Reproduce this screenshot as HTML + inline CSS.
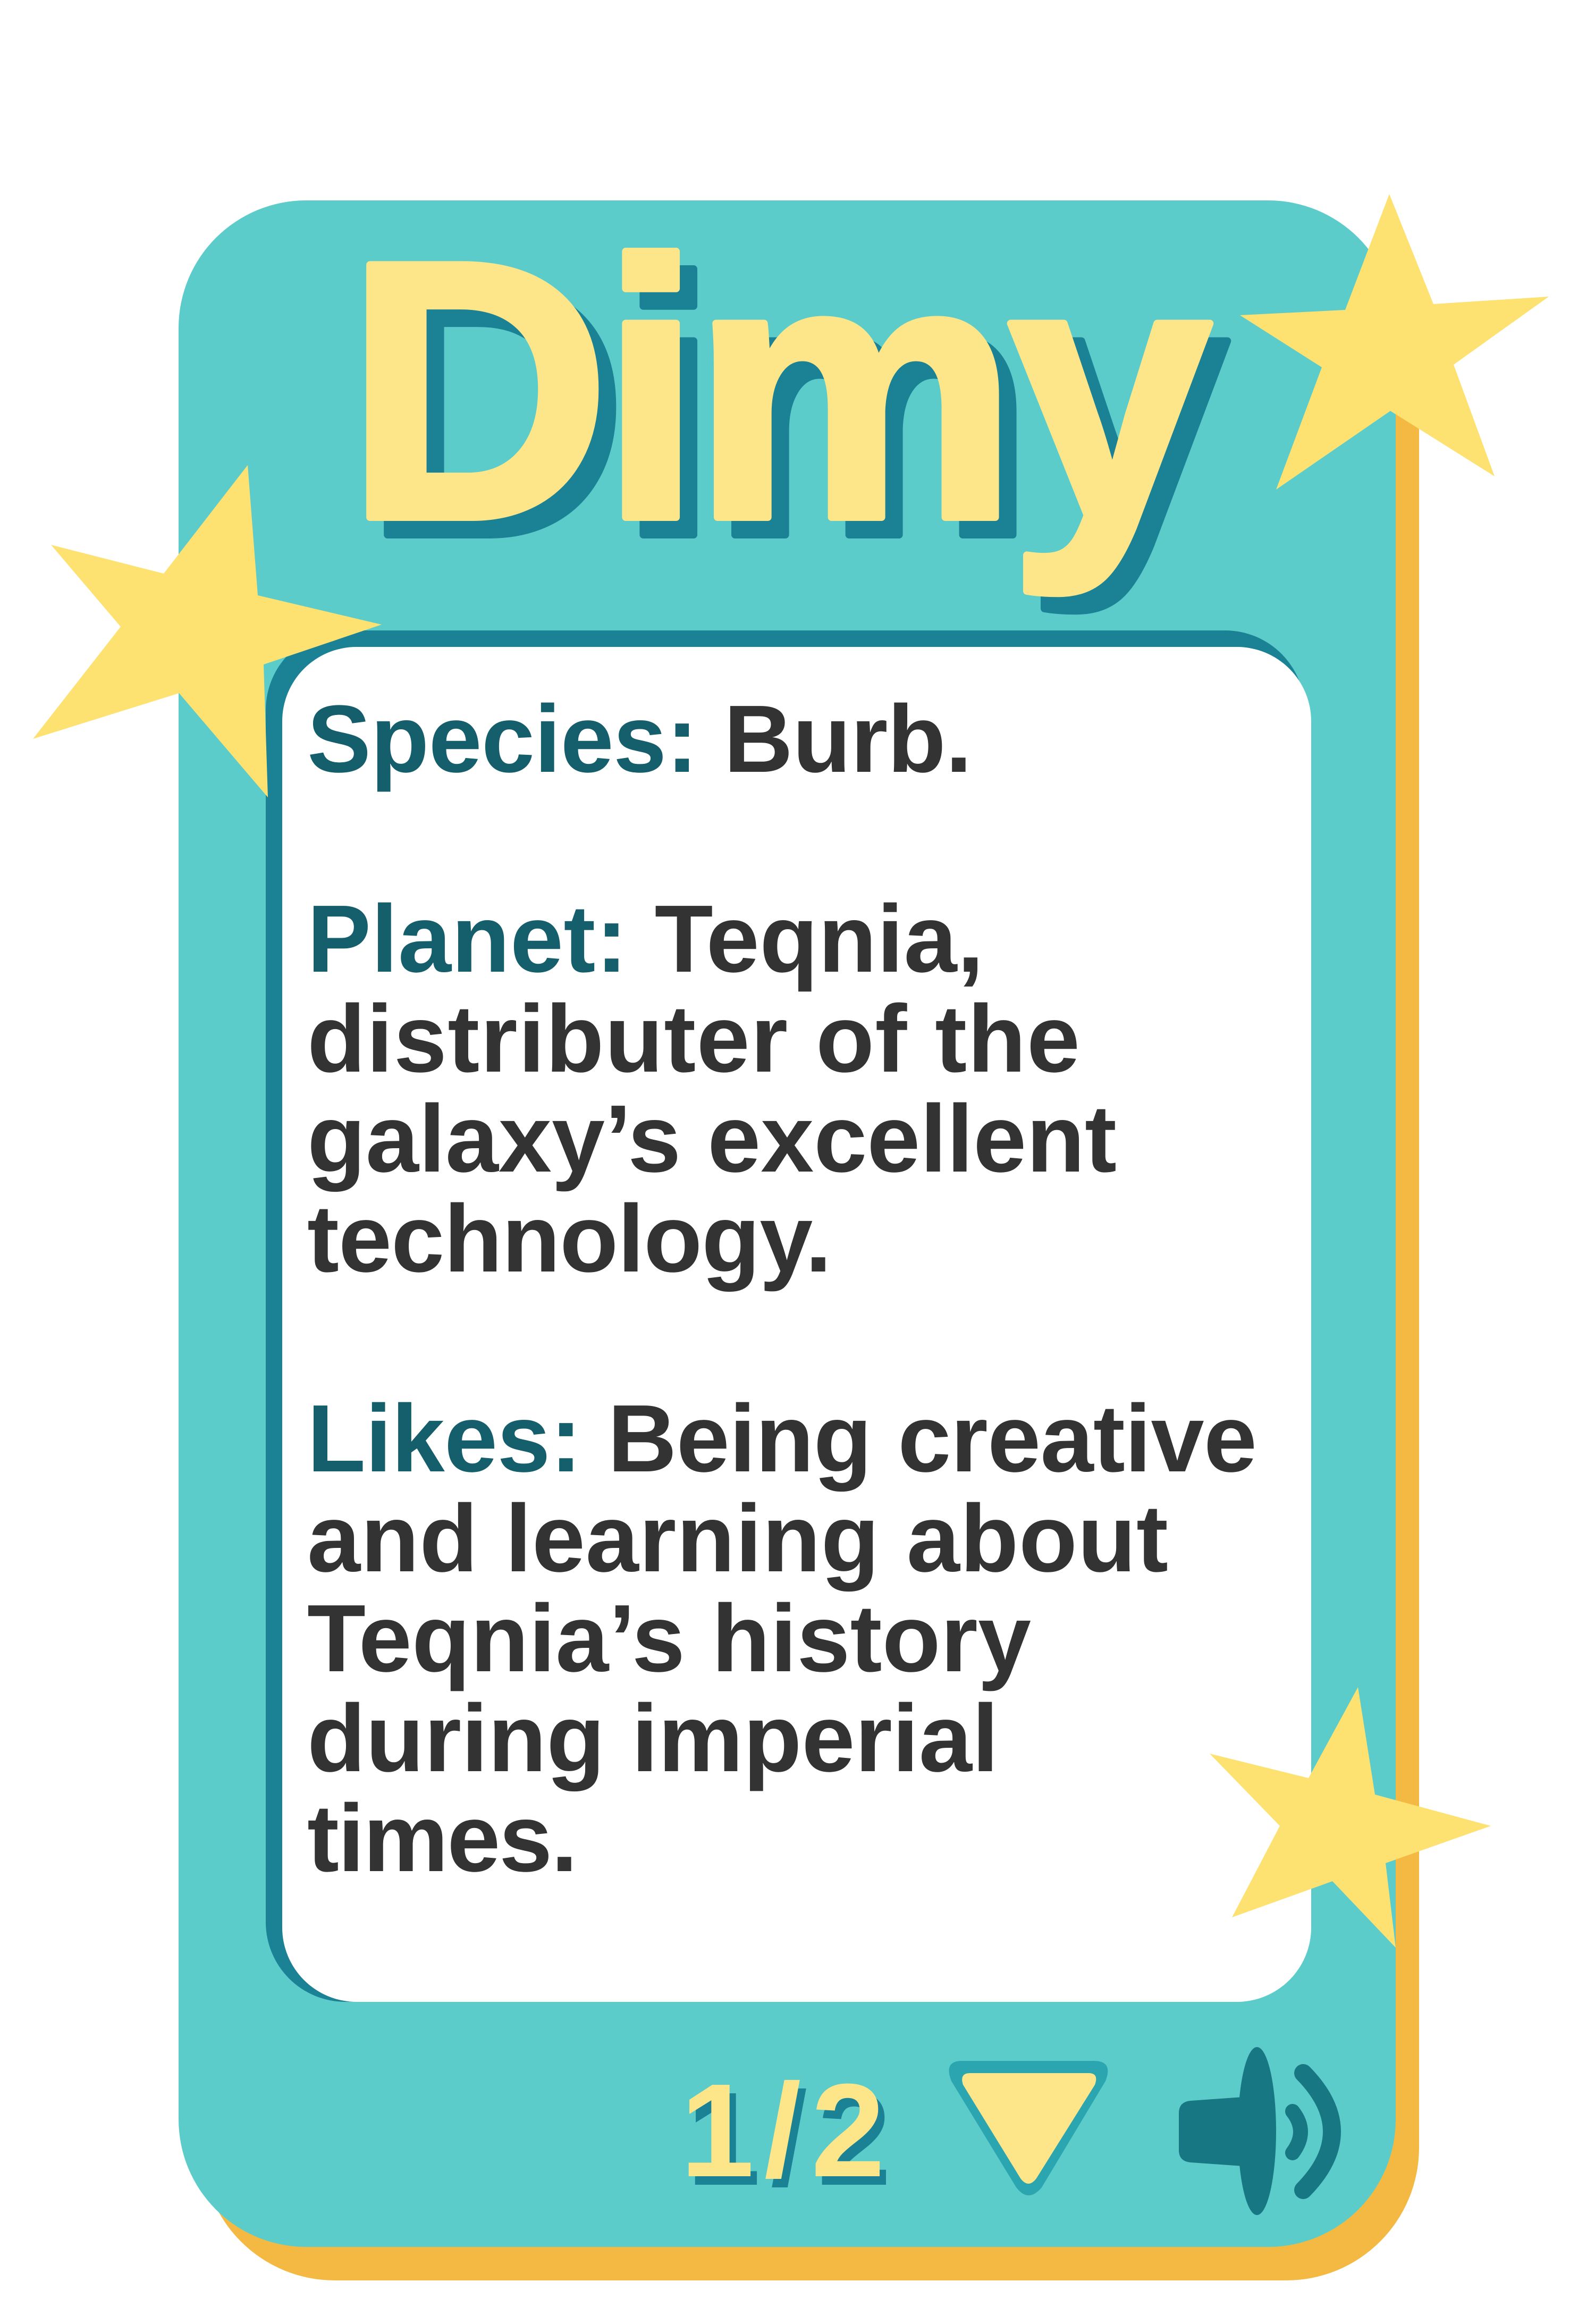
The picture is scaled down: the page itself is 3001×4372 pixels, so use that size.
<!DOCTYPE html>
<html><head><meta charset="utf-8"><style>
html,body{margin:0;padding:0;background:#fff;}
svg{display:block;}
text{font-family:"Liberation Sans",sans-serif;font-weight:bold;}
</style></head><body>
<svg width="3001" height="4372" viewBox="0 0 3001 4372" xmlns="http://www.w3.org/2000/svg">
<rect x="0" y="0" width="3001" height="4372" fill="#fff"/>
<rect x="380" y="420" width="2290" height="3870" rx="250" fill="#f3b942"/>
<rect x="336" y="377" width="2290" height="3850" rx="240" fill="#5ccccb"/>
<text x="683" y="1006" font-size="690" fill="#1b8195" stroke="#1b8195" stroke-width="14" stroke-linejoin="round" textLength="1630" lengthAdjust="spacing">Dimy</text>
<text x="650" y="973" font-size="690" fill="#fde68a" stroke="#fde68a" stroke-width="14" stroke-linejoin="round" textLength="1630" lengthAdjust="spacing">Dimy</text>
<rect x="500" y="1186" width="1955" height="2580" rx="150" fill="#1b8195"/>
<rect x="531" y="1217" width="1936" height="2549" rx="140" fill="#fff"/>
<g font-size="180" fill="#333">
<text x="578" y="1452" textLength="1251" lengthAdjust="spacing"><tspan fill="#155e6b">Species:</tspan> Burb.</text>
<text x="578" y="1828" textLength="1273" lengthAdjust="spacing"><tspan fill="#155e6b">Planet:</tspan> Teqnia,</text>
<text x="578" y="2016" textLength="1454" lengthAdjust="spacing">distributer of the</text>
<text x="578" y="2204" textLength="1523" lengthAdjust="spacing">galaxy’s excellent</text>
<text x="578" y="2392" textLength="987" lengthAdjust="spacing">technology.</text>
<text x="578" y="2768" textLength="1787" lengthAdjust="spacing"><tspan fill="#155e6b">Likes:</tspan> Being creative</text>
<text x="578" y="2956" textLength="1620" lengthAdjust="spacing">and learning about</text>
<text x="578" y="3144" textLength="1362" lengthAdjust="spacing">Teqnia’s history</text>
<text x="578" y="3332" textLength="1301" lengthAdjust="spacing">during imperial</text>
<text x="578" y="3520" textLength="509" lengthAdjust="spacing">times.</text>
</g>
<g fill="#fde272">
<polygon points="2614,365 2697,572 2914,558 2735,686 2812,896 2616,773 2401,921 2487,691 2333,593 2531,583"/>
<polygon points="466,875 485,1120 718,1175 496,1250 504,1500 337,1304 62,1390 227,1179 96,1025 308,1079"/>
<polygon points="2555,3174 2587,3376 2805,3435 2607,3505 2626,3664 2507,3539 2318,3607 2408,3435 2276,3299 2462,3345"/>
</g>
<text x="1292" y="4110" font-size="250" fill="#1b8195" textLength="385" lengthAdjust="spacing">1/2</text>
<text x="1280" y="4094" font-size="250" fill="#fde68a" textLength="385" lengthAdjust="spacing">1/2</text>
<path d="M1810,3877 L2058,3877 Q2095,3877 2080,3915 L1960,4115 Q1935,4145 1912,4115 L1790,3915 Q1775,3877 1810,3877 Z" fill="#2ba5b0"/>
<path d="M1825,3900 L2048,3900 Q2068,3900 2060,3922 L1950,4098 Q1935,4118 1920,4098 L1812,3922 Q1805,3900 1825,3900 Z" fill="#fde68a"/>
<g fill="#177783">
<path d="M2240,3952 L2338,3945 L2338,4075 L2240,4068 Q2218,4066 2218,4045 L2218,3975 Q2218,3954 2240,3952 Z"/>
<ellipse cx="2365" cy="4009" rx="36" ry="158"/>
</g>
<g fill="none" stroke="#177783" stroke-linecap="round">
<path d="M2432,3972 Q2462,4010 2432,4050" stroke-width="28"/>
<path d="M2452,3900 Q2560,4010 2452,4120" stroke-width="34"/>
</g>
</svg>
</body></html>
